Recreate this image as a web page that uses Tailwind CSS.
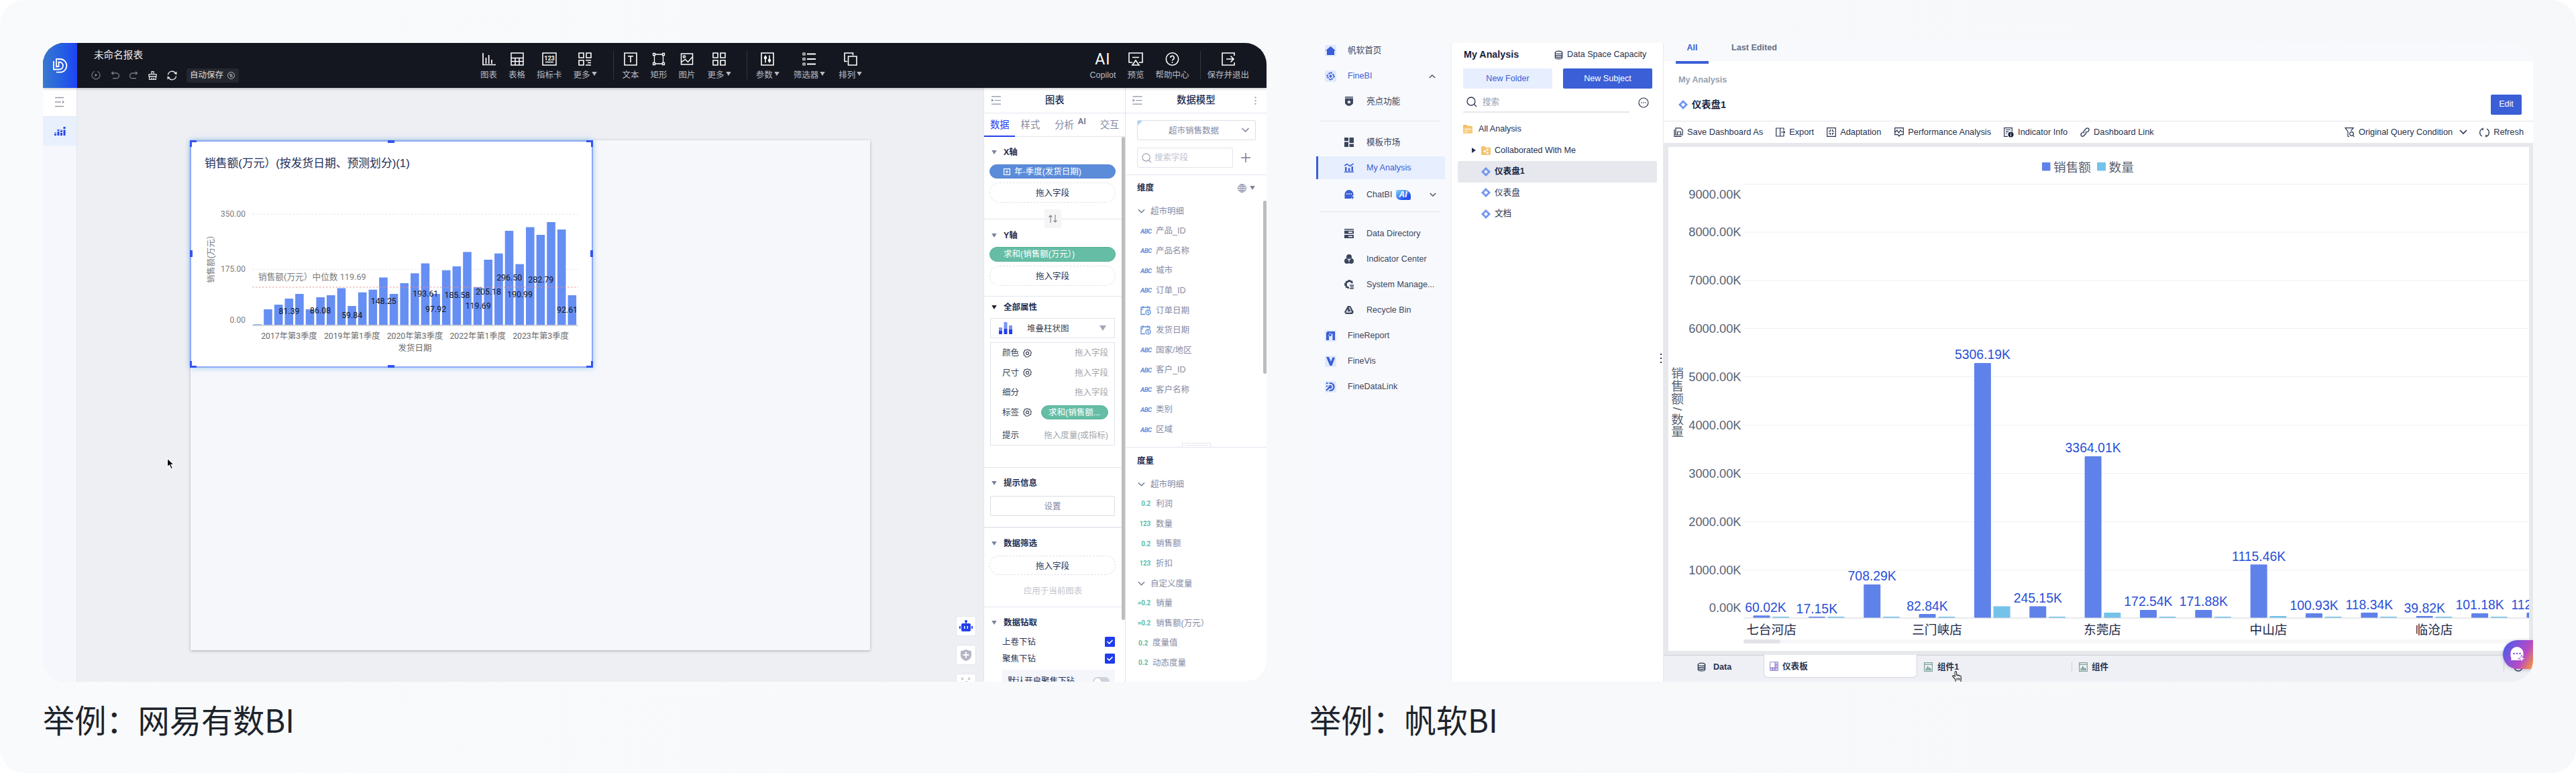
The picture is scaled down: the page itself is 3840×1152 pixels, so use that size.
<!DOCTYPE html>
<html lang="zh-CN">
<head>
    <meta charset="UTF-8">
    <meta name="viewport" content="width=device-width, initial-scale=1.0">
    <title>BI 工具对比</title>
    <script src="https://cdn.jsdelivr.net/npm/@tailwindcss/browser@4"></script>
    <style>
        body {
            font-family: 'Liberation Sans', 'Noto Sans CJK SC', sans-serif;
        }
        svg {
            flex-shrink: 0;
        }
        .num {
            font-family: 'Roboto', 'Noto Sans CJK SC', sans-serif;
        }
        .cap {
            font-family: 'Noto Sans CJK SC', sans-serif;
        }
    </style>
</head>
<body class="bg-white text-[12.5px] leading-none">
    <!-- shared icons -->
    <svg class="hidden">
        <symbol id="caret" viewBox="0 0 10 8"><path d="M0 0h10L5 8z" fill="currentColor"/></symbol>
        <symbol id="chev" viewBox="0 0 12 8"><path d="M1 1l5 5 5-5" fill="none" stroke="currentColor" stroke-width="1.6"/></symbol>
        <symbol id="gear" viewBox="0 0 14 14"><path d="M7 .8l1.9 1.3 2.3-.1.6 2.2 1.6 1.6-.9 2.1.1 2.3-2.3.7-1.5 1.7L7 12.9l-2.2.3-1.3-1.9-2.1-1 .2-2.3L.8 6l1.4-1.8.4-2.2 2.3-.1z" fill="none" stroke="currentColor" stroke-width="1.2" stroke-linejoin="round"/><circle cx="7" cy="7" r="2.3" fill="none" stroke="currentColor" stroke-width="1.2"/></symbol>
        <symbol id="collapse" viewBox="0 0 15 14"><path d="M0 1h15M5 7h10M0 13h15" stroke="currentColor" stroke-width="1.3"/><path d="M0 4.5v5L3.6 7z" fill="currentColor"/></symbol>
        <symbol id="glass" viewBox="0 0 16 16"><circle cx="7" cy="7" r="6" fill="none" stroke="currentColor" stroke-width="1.3"/><path d="M11.4 11.4L15 15" stroke="currentColor" stroke-width="1.3"/></symbol>
        <symbol id="db" viewBox="0 0 14 14"><g fill="none" stroke="currentColor" stroke-width="1.3"><ellipse cx="7" cy="3" rx="5.6" ry="2.3"/><path d="M1.4 3v8c0 1.3 2.5 2.3 5.6 2.3s5.6-1 5.6-2.3V3M1.4 5.8c0 1.2 2.5 2.2 5.6 2.2s5.6-1 5.6-2.2M1.4 8.6c0 1.2 2.5 2.2 5.6 2.2s5.6-1 5.6-2.2"/></g></symbol>
        <symbol id="dash" viewBox="0 0 14 14"><g fill="#6f95f0"><path d="M7 0l3 3-2 2-1-1-2 2-2-2z"/><path d="M14 7l-3 3-2-2 1-1-2-2 2-2z"/><path d="M7 14l-3-3 2-2 1 1 2-2 2 2z"/><path d="M0 7l3-3 2 2-1 1 2 2-2 2z"/></g></symbol>
        <symbol id="date" viewBox="0 0 16 14"><g fill="none" stroke="#5b8cda" stroke-width="1.3"><path d="M7 12.5H1V2h13v3.2M1 5.2h3M4 0v3.4M11 0v3.4"/><circle cx="11.5" cy="9.6" r="3.6"/><path d="M11.2 7.6v2.3l1.6 1"/></g></symbol>
        <symbol id="comp" viewBox="0 0 13 14"><g fill="none" stroke="#7fa59c" stroke-width="1.2"><path d="M.6.6h11.8v12.8H.6zM.6 3.4h11.8"/><path d="M3.4 12V8.5M5.6 12V6M7.7 12V7.5M9.8 12V9" stroke="#3e7d6e"/></g></symbol>
    </svg>

    <main class="flex h-[1152px] w-[3840px] gap-16 overflow-hidden rounded-[36px] bg-linear-to-r from-[#f8fafb] to-[#f6f8fa] px-16 pt-16">
        <figure class="w-[1824px]">
            <div class="flex h-[952px] flex-col overflow-hidden rounded-[32px] bg-[#eeeff3]">
                <!-- top bar -->
                <header class="relative z-10 flex h-[67px] shrink-0 bg-[#151720] text-[#b9bac0] shadow-[0_1px_4px_rgba(0,0,0,0.25)]">
                    <div class="flex w-[51px] items-center justify-center bg-linear-to-r from-[#3b78cf] to-[#1f43f2]">
                        <svg width="22" height="22" viewBox="0 0 22 22" fill="none" stroke="#fff" stroke-width="1.8"><path d="M1 4v12.500h8.500a5.500 5.500 0 0 0 0-11H8.500V12H6"/><path d="M5 13.500V1h5.500a9.600 9.600 0 0 1 0 19.700H5"/></svg>
                    </div>
                    <div class="w-[601px] pt-[10px] pl-[25px]">
                        <div class="text-[14.6px] leading-[17px] text-[#e9e9ec]">未命名报表</div>
                        <div class="mt-[10px] flex h-[22px] items-center">
                            <svg class="-ml-[4px]" width="14" height="14" viewBox="0 0 14 14" fill="none" stroke="#77787f" stroke-width="1.2"><path d="M9 1.200A6 6 0 1 1 5 1.200"/><path d="M5.500 4.500v5L9.500 7z" fill="#77787f" stroke="none"/></svg>
                            <svg class="ml-[15px]" width="13" height="12" viewBox="0 0 13 12" fill="none" stroke="#77787f" stroke-width="1.4"><path d="M1 3h7.500a3.800 3.800 0 0 1 0 7.800H3"/><path d="M4 0L.5 3 4 6z" fill="#77787f" stroke="none"/></svg>
                            <svg class="ml-[15px]" width="13" height="12" viewBox="0 0 13 12" fill="none" stroke="#77787f" stroke-width="1.4"><path d="M12 3H4.500a3.800 3.800 0 0 0 0 7.800H10"/><path d="M9 0l3.500 3L9 6z" fill="#77787f" stroke="none"/></svg>
                            <svg class="ml-[15px]" width="13" height="13" viewBox="0 0 13 13" fill="none" stroke="#e4e4e6" stroke-width="1.300"><path d="M5 4.500V.7h3v3.800M1 8V4.700h11V8zM1.600 8v4.300h9.800V8M5 12V9.800M8 12V9.800"/></svg>
                            <svg class="ml-[15px]" width="15" height="15" viewBox="0 0 15 15" fill="none" stroke="#e4e4e6" stroke-width="1.400"><path d="M1.500 6.500A6 6 0 0 1 12.800 4.500M13.500 8.500A6 6 0 0 1 2.200 10.500"/><path d="M14.500 1.500v5l-4-2zM.5 13.500v-5l4 2z" fill="#e4e4e6" stroke="none"/></svg>
                            <div class="ml-[14px] flex h-[21px] w-[78px] items-center gap-[6px] rounded-[3px] bg-[#25272f] pl-[5px] text-[#dededf]">自动保存
                                <svg width="11" height="11" viewBox="0 0 11 11" fill="none" stroke="#b9bac0"><circle cx="5.500" cy="5.500" r="5"/><path d="M3 4.500L4.500 3v5M8 6.500L6.500 8V3"/></svg>
                            </div>
                        </div>
                    </div>
                    <nav class="flex items-start pt-[14px] [&>div]:flex [&>div]:flex-col [&>div]:items-center [&>div]:gap-[8px] [&_span]:whitespace-nowrap [&_span]:leading-[12px]">
                        <div><svg width="20" height="20" viewBox="0 0 20 20" fill="none" stroke="#fff" stroke-width="1.700"><path d="M1 1v17.500h19M5.500 17V8M9.700 17V4M14 17v-6"/></svg><span>图表</span></div>
                        <div class="ml-[17px]"><svg width="20" height="20" viewBox="0 0 20 20" fill="none" stroke="#fff" stroke-width="1.500"><path d="M1 1h18v18H1zM1 8.500h18M1 13.500h18M7 8.500V19M13 8.500V19"/></svg><span>表格</span></div>
                        <div class="ml-[17px]"><svg width="22" height="20" viewBox="0 0 22 20" fill="none" stroke="#fff" stroke-width="1.500"><path d="M1 1h20v18H1zM5 14.500h12"/><text x="11" y="11.500" font-size="9" text-anchor="middle" fill="#fff" stroke="none" font-weight="bold" class="num">123</text></svg><span>指标卡</span></div>
                        <div class="ml-[17px]"><svg width="20" height="20" viewBox="0 0 20 20" fill="none" stroke="#fff" stroke-width="1.600"><path d="M1 1h7v7H1zM12 1h7v7h-7zM1 12h7v7H1zM11 12h8M14 15.500h5M11 19h8"/></svg><span>更多<svg class="ml-[2px] inline align-[3px]" width="8" height="6"><use href="#caret"/></svg></span></div>
                        <i class="mt-[-2px] ml-[24px] h-[42px] w-px bg-[#35373f]"></i>
                        <div class="ml-[13px]"><svg width="20" height="20" viewBox="0 0 20 20" fill="none" stroke="#fff" stroke-width="1.600"><path d="M1 1h18v18H1zM6 5.800h8M10 6v9"/></svg><span>文本</span></div>
                        <div class="ml-[17px]"><svg width="20" height="20" viewBox="0 0 20 20" fill="none" stroke="#fff" stroke-width="1.300"><path d="M3.500 5v10M16.500 5v10M5 3h10M5 17h10M1.500 1.500h3v3h-3zM15.500 1.500h3v3h-3zM1.500 15.500h3v3h-3zM15.500 15.500h3v3h-3z"/></svg><span>矩形</span></div>
                        <div class="ml-[17px]"><svg width="20" height="20" viewBox="0 0 20 20" fill="none" stroke="#fff" stroke-width="1.500"><path d="M1.500 2h17v16h-17zM2 14.500l5.500-4 4 4 6.500-7.500"/><circle cx="6" cy="6.500" r="1.600"/></svg><span>图片</span></div>
                        <div class="ml-[18px]"><svg width="20" height="20" viewBox="0 0 20 20" fill="none" stroke="#fff" stroke-width="1.600"><path d="M1 1h7v7H1zM12 1h7v7h-7zM1 12h7v7H1zM12 12h7v7h-7z"/></svg><span>更多<svg class="ml-[2px] inline align-[3px]" width="8" height="6"><use href="#caret"/></svg></span></div>
                        <i class="mt-[-2px] ml-[23px] h-[42px] w-px bg-[#35373f]"></i>
                        <div class="ml-[13px]"><svg width="20" height="20" viewBox="0 0 20 20" fill="none" stroke="#fff" stroke-width="1.600"><path d="M1 1h18v18H1zM7 4.500v11M13 4.500v11"/><circle cx="7" cy="8" r="1.500" fill="#fff"/><circle cx="13" cy="12" r="1.500" fill="#fff"/></svg><span>参数<svg class="ml-[2px] inline align-[3px]" width="8" height="6"><use href="#caret"/></svg></span></div>
                        <div class="ml-[21px]"><svg width="20" height="20" viewBox="0 0 20 20" fill="none" stroke="#fff" stroke-width="1.200"><path d="M1 1h3v3H1zM1 8.500h3v3H1zM1 16h3v3H1z"/><path d="M7 2.500h13M7 10h13M7 17.500h13" stroke-width="2"/></svg><span>筛选器<svg class="ml-[2px] inline align-[3px]" width="8" height="6"><use href="#caret"/></svg></span></div>
                        <div class="ml-[20px]"><svg width="20" height="20" viewBox="0 0 20 20" fill="none" stroke="#fff" stroke-width="1.600"><path d="M5 13.500H1V1h12.500v3.500M6.500 6H19v13H6.500z"/></svg><span>排列<svg class="ml-[2px] inline align-[3px]" width="8" height="6"><use href="#caret"/></svg></span></div>
                    </nav>
                    <nav class="mr-[26px] ml-auto flex items-start pt-[14px] [&>div]:flex [&>div]:flex-col [&>div]:items-center [&>div]:gap-[8px] [&_span]:whitespace-nowrap [&_span]:leading-[12px]">
                        <div><b class="num h-[20px] text-[23px] leading-[21px] font-normal tracking-[1px] text-white">AI</b><span>Copilot</span></div>
                        <div class="ml-[17px]"><svg width="22" height="20" viewBox="0 0 22 20" fill="none" stroke="#fff" stroke-width="1.600"><path d="M6 15H1V1h20v14h-5M6 7.500h10M11 12l5 7H6z"/></svg><span>预览</span></div>
                        <div class="ml-[17px]"><svg width="21" height="20" viewBox="0 0 21 20" fill="none" stroke="#fff" stroke-width="1.600"><circle cx="10.500" cy="10" r="9.200"/><path d="M7.800 8a2.700 2.700 0 1 1 4 2.400c-1 .6-1.300 1-1.300 2.100M10.500 14v1.800"/></svg><span>帮助中心</span></div>
                        <i class="mt-[-2px] ml-[17px] h-[42px] w-px bg-[#35373f]"></i>
                        <div class="ml-[9px]"><svg width="20" height="20" viewBox="0 0 20 20" fill="none" stroke="#fff" stroke-width="1.600"><path d="M19 5V1H1v18h18v-4M7 10h11M13.500 5.500L18 10l-4.500 4.500"/></svg><span>保存并退出</span></div>
                    </nav>
                </header>

                <div class="flex flex-1">
                    <aside class="w-[50px] bg-[#f5f7fc] shadow-[1px_0_1px_#e4e6ec]">
                        <div class="flex h-[43px] items-center justify-center border-b border-[#e6e8f0] bg-white">
                            <svg width="14" height="16" viewBox="0 0 14 16" stroke="#9a9ba6" stroke-width="1.500"><path d="M0 1.500h13M0 8h9M0 14.500h13"/><path d="M11 5.500v5L14 8z" fill="#9a9ba6" stroke="none"/></svg>
                        </div>
                        <div class="flex h-[43px] items-center justify-center bg-[#e9f0fd]">
                            <svg width="17" height="13" viewBox="0 0 17 13" fill="#2544f0"><path d="M0 10.500h3V13H0zM0 8.500h3v1H0zM4.500 7h3v6h-3zM4.500 4h3v2h-3zM9 9h3v4H9zM9 6h3v2H9zM9 4.500h3v1H9zM13.500 4.500h3V13h-3zM13.500 0h3v3h-3z"/></svg>
                        </div>
                    </aside>

                    <!-- report canvas -->
                    <section class="relative w-[1353px]">
                        <div class="absolute top-[78px] left-[170px] h-[760px] w-[1013px] bg-[#f5f7fb] shadow-[0_1px_4px_rgba(0,0,0,0.28)]"></div>
                        <div class="absolute top-[78px] left-[169px] h-[339px] w-[601px] bg-white shadow-[0_0_8px_rgba(90,170,230,0.6)]">
                            <svg id="salesChart" class="block" width="601" height="339" viewBox="283 209 601 339"></svg>
                        </div>
                        <svg class="absolute top-[551px] left-[134px]" width="14" height="22" viewBox="0 0 14 22"><path d="M1.500 1v13l3-2.700 2.500 5.500 2.500-1.100L7 10.500h4.300z" fill="#000" stroke="#fff" stroke-width="1.200"/></svg>
                        <div class="absolute top-[787px] left-[1311px] flex flex-col gap-[13px] [&>div]:flex [&>div]:h-[30px] [&>div]:w-[30px] [&>div]:items-center [&>div]:justify-center [&>div]:rounded-[3px] [&>div]:border [&>div]:border-[#e3e5ee] [&>div]:bg-white">
                            <div><svg width="20" height="18" viewBox="0 0 20 18" fill="#2340ef"><circle cx="10" cy="2" r="2"/><path d="M9.200 2h1.600v4H9.200zM0 9h2v4H0zM18 9h2v4h-2zM5 5h10a2 2 0 0 1 2 2v8a2 2 0 0 1-2 2H5a2 2 0 0 1-2-2V7a2 2 0 0 1 2-2z"/><path d="M7 9h1.500v4H7zM11.500 9H13v4h-1.500z" fill="#fff"/></svg></div>
                            <div><svg width="16" height="17" viewBox="0 0 16 17"><path d="M8 0l8 2.500v6C16 13 12 15.800 8 17c-4-1.200-8-4-8-8.500v-6z" fill="#b4b5c2"/><path d="M8 3.500v9M3.500 8h9" stroke="#fff" stroke-width="2"/></svg></div>
                            <div><svg width="16" height="20" viewBox="0 0 16 20" fill="none" stroke="#bdbec8" stroke-width="1.200"><path d="M1 1l3 3M4 1L1 4M11 1l3 3M14 1l-3 3M4 16l5-5M7 8c2-3 5-1 3 3"/></svg></div>
                        </div>
                    </section>

                    <!-- chart settings -->
                    <section class="relative w-[210px] bg-white text-[#2a3454] shadow-[-1px_0_0_#e4e6ee]">
                        <div class="flex h-[38px] items-center border-b border-[#e3e5ee]">
                            <svg class="ml-[11px] text-[#8a8fa8]" width="14" height="13"><use href="#collapse"/></svg>
                            <b class="ml-[66px] text-[14.3px] font-medium text-[#202b50]">图表</b>
                        </div>
                        <div class="flex h-[35px] items-center border-b border-[#e3e5ee] pl-[9px] text-[14.3px] text-[#8288a2]">
                            <span class="relative text-[#2340ef] after:absolute after:-left-[9px] after:top-[23px] after:h-[2px] after:w-[46px] after:bg-[#2340ef]">数据</span>
                            <span class="ml-[17px]">样式</span>
                            <span class="ml-[22px]">分析</span>
                            <b class="num mb-[9px] ml-[6px] w-[12px] text-[12.5px] text-[#777c92]">AI</b>
                            <span class="ml-[21px]">交互</span>
                        </div>
                        <div class="absolute top-[73px] right-0 h-[720px] w-[5px] rounded-full bg-[#bdbdbd]"></div>
                        <div class="mr-[5px] [&_h3]:flex [&_h3]:h-[22px] [&_h3]:items-center [&_h3]:gap-[10px] [&_h3]:pl-[11px] [&_h3]:font-bold [&_h3]:text-[#202b50]">
                            <div class="relative h-[123px] border-b border-[#e3e5ee] pt-[12px]">
                                <h3><svg class="text-[#7b809a]" width="8" height="6"><use href="#caret"/></svg>X轴</h3>
                                <div class="mt-[7px] ml-[8px] flex h-[21px] w-[188px] items-center gap-[6px] rounded-full border border-[#4f80cf] bg-[#5b8cda] pt-px pl-[20px] text-white"><svg width="10" height="10" viewBox="0 0 10 10" fill="none" stroke="#fff" stroke-width="1.200"><path d="M.6.6h8.800v8.800H.6zM5 2.800v4.400M2.800 5h4.400"/></svg>年-季度(发货日期)</div>
                                <div class="mt-[6px] ml-[8px] flex h-[30px] w-[188px] items-center justify-center rounded-full border border-dashed border-[#dfe1e8] pt-[3px]">拖入字段</div>
                                <div class="absolute -bottom-[14px] left-[90px] flex h-[28px] w-[25px] items-center justify-center bg-[#f5f5f6]"><svg width="13" height="12" viewBox="0 0 13 12" fill="none" stroke="#85868c" stroke-width="1.200"><path d="M3 12V1M.5 3.500L3 1l2.500 2.500M10 0v11M7.500 8.500L10 11l2.500-2.500"/></svg></div>
                            </div>
                            <div class="h-[115px] border-b border-[#e3e5ee] pt-[13px]">
                                <h3><svg class="text-[#7b809a]" width="8" height="6"><use href="#caret"/></svg>Y轴</h3>
                                <div class="mt-[6px] ml-[8px] flex h-[22px] w-[188px] items-center rounded-full border border-[#55b096] bg-[#65bda6] pt-px pl-[20px] text-white">求和(销售额(万元）)</div>
                                <div class="mt-[6px] ml-[8px] flex h-[30px] w-[188px] items-center justify-center rounded-full border border-dashed border-[#dfe1e8] pt-[3px]">拖入字段</div>
                            </div>
                            <div class="h-[255px] border-b border-[#e3e5ee] pt-[5px]">
                                <h3><svg class="text-[#222]" width="8" height="6"><use href="#caret"/></svg>全部属性</h3>
                                <div class="mt-[5px] ml-[9px] flex h-[30px] w-[186px] items-center border border-[#e0e2ea] pl-[12px] text-[#3a3f50]">
                                    <svg width="20" height="18" viewBox="0 0 20 18"><path d="M0 8h5v5H0zM7.500 0h5v10h-5zM15 5h5v6h-5z" fill="#7d93f7"/><path d="M0 13h5v5H0zM7.500 10h5v8h-5zM15 11h5v7h-5z" fill="#2340ef"/></svg>
                                    <span class="ml-[22px] pt-[2px]">堆叠柱状图</span>
                                    <svg class="ml-[45px] text-[#a3a6b8]" width="10" height="8"><use href="#caret"/></svg>
                                </div>
                                <div class="mt-[6px] ml-[9px] h-[154px] w-[186px] border border-[#e0e2ea] pr-[9px] pl-[17px] text-[#3a3f50] [&>div]:flex [&>div]:h-[29.5px] [&>div]:items-center [&>div]:pt-px [&_em]:ml-auto [&_em]:text-[#a5a6ac] [&_em]:not-italic">
                                    <div>颜色<svg class="ml-[6px]" width="13" height="13"><use href="#gear"/></svg><em>拖入字段</em></div>
                                    <div>尺寸<svg class="ml-[6px]" width="13" height="13"><use href="#gear"/></svg><em>拖入字段</em></div>
                                    <div>细分<em>拖入字段</em></div>
                                    <div>标签<svg class="ml-[6px]" width="13" height="13"><use href="#gear"/></svg><span class="ml-auto flex h-[21px] w-[100px] items-center rounded-full border border-[#55b096] bg-[#65bda6] pl-[10px] text-white">求和(销售额...</span></div>
                                    <div class="mt-[5px]">提示<em>拖入度量(或指标)</em></div>
                                </div>
                            </div>
                            <div class="h-[90px] border-b-2 border-[#e9eaf1] pt-[12px]">
                                <h3><svg class="text-[#7b809a]" width="8" height="6"><use href="#caret"/></svg>提示信息</h3>
                                <div class="mt-[8px] ml-[9px] flex h-[30px] w-[186px] items-center justify-center rounded-[2px] border border-[#dcdde4] pt-[2px] text-[#7f859f]">设置</div>
                            </div>
                            <div class="h-[118px] border-b border-[#e3e5ee] pt-[12px]">
                                <h3><svg class="text-[#7b809a]" width="8" height="6"><use href="#caret"/></svg>数据筛选</h3>
                                <div class="mt-[7px] ml-[8px] flex h-[29px] w-[188px] items-center justify-center rounded-full border border-dashed border-[#dfe1e8] pt-[3px]">拖入字段</div>
                                <div class="mt-[13px] flex h-[22px] items-center justify-center text-[#c2c4cd]">应用于当前图表</div>
                            </div>
                            <div class="h-[111px] overflow-hidden pt-[12px]">
                                <h3><svg class="text-[#7b809a]" width="8" height="6"><use href="#caret"/></svg>数据钻取</h3>
                                <div class="mt-[5px] mr-[10px] ml-[27px] flex h-[25px] items-center justify-between"><span class="pt-[2px]">上卷下钻</span><svg width="15" height="15" viewBox="0 0 15 15"><rect width="15" height="15" rx="1.500" fill="#1f3cf0"/><path d="M3.500 7l3 3 5-5" fill="none" stroke="#fff" stroke-width="1.700"/></svg></div>
                                <div class="mr-[10px] ml-[27px] flex h-[25px] items-center justify-between"><span class="pt-[2px]">聚焦下钻</span><svg width="15" height="15" viewBox="0 0 15 15"><rect width="15" height="15" rx="1.500" fill="#1f3cf0"/><path d="M3.500 7l3 3 5-5" fill="none" stroke="#fff" stroke-width="1.700"/></svg></div>
                                <div class="mt-[4px] ml-[26px] flex h-[34px] w-[169px] items-center justify-between bg-[#f5f6fb] pr-[8px] pl-[9px]">默认开启聚焦下钻<i class="mt-[1px] flex h-[14px] w-[25px] rounded-full bg-[#cdd2dc] p-[2px]"><i class="h-[10px] w-[10px] rounded-full bg-white"></i></i></div>
                            </div>
                        </div>
                    </section>

                    <!-- data model -->
                    <section class="relative ml-px w-[210px] bg-white text-[#858ba5] shadow-[-1px_0_0_#e0e2ea]">
                        <div class="flex h-[38px] items-center border-b border-[#e3e5ee]">
                            <svg class="ml-[10px] text-[#8a8fa8]" width="15" height="13"><use href="#collapse"/></svg>
                            <b class="ml-[51px] text-[14.4px] font-medium text-[#202b50]">数据模型</b>
                            <svg class="ml-[58px]" width="3" height="12" viewBox="0 0 3 12" fill="#a9acba"><circle cx="1.500" cy="1.200" r="1.200"/><circle cx="1.500" cy="6" r="1.200"/><circle cx="1.500" cy="10.800" r="1.200"/></svg>
                        </div>
                        <div class="h-[92px] border-b border-[#e3e5ee] pt-[10px] pl-[17px]">
                            <div class="relative flex h-[30px] w-[177px] items-center justify-center rounded-[2px] border border-[#dddfe6]">
                                <svg class="absolute top-0 left-0" width="7" height="7"><path d="M0 0h7L0 7z" fill="#a9d0f5"/></svg>
                                <span class="-ml-[8px] pt-[2px]">超市销售数据</span>
                                <svg class="absolute right-[8px]" width="13" height="8"><use href="#chev"/></svg>
                            </div>
                            <div class="mt-[11px] flex items-center">
                                <div class="flex h-[30px] w-[143px] items-center gap-[4px] rounded-[2px] border border-[#e2e4ea] pl-[6px] text-[#c0c3ce]"><svg class="text-[#9a9eb0]" width="15" height="15"><use href="#glass"/></svg><span class="pt-px">搜索字段</span></div>
                                <svg class="ml-[12px]" width="14" height="14" viewBox="0 0 14 14" stroke="#757a92" stroke-width="1.500"><path d="M7 0v14M0 7h14"/></svg>
                            </div>
                        </div>
                        <div class="flex h-[38px] items-center pl-[17px]">
                            <b class="text-[#202b50]">维度</b>
                            <svg class="ml-[125px]" width="13" height="13" viewBox="0 0 13 13" fill="none" stroke="#8a8fa8"><circle cx="6.500" cy="6.500" r="6"/><ellipse cx="6.500" cy="6.500" rx="2.800" ry="6"/><path d="M6.500.5v12M.5 6.500h12M1.500 3.500h10M1.500 9.500h10"/></svg>
                            <svg class="ml-[5px] text-[#7b809a]" width="8" height="6"><use href="#caret"/></svg>
                        </div>
                        <div class="absolute top-[168px] right-0 h-[258px] w-[5px] rounded-full bg-[#bdbdbd]"></div>
                        <div id="dims" class="h-[368px] border-b border-[#e3e5ee] pt-px"></div>
                        <div class="relative pt-px">
                            <div class="absolute -top-[7px] left-[84px] h-[7px] w-[43px] border border-b-0 border-[#e3e5ee] px-[4px] pt-[2px]"><i class="block h-px bg-[#e3e5ee]"></i></div>
                            <b class="flex h-[39px] items-center pl-[17px] text-[#202b50]">度量</b>
                            <div id="measures"></div>
                        </div>
                    </section>
                </div>
            </div>
            <figcaption class="cap mt-[32px] text-[47.2px] leading-[48px] text-[#1d232c]">举例：网易有数BI</figcaption>
        </figure>

        <figure class="w-[1824px]">
            <div class="flex h-[952px] overflow-hidden rounded-[32px] bg-white text-[12.6px] text-[#3b465e]">
                <!-- product navigation -->
                <aside class="h-full w-[212px] border-r border-[#eceef3] bg-[#f8f9fd] [&_a]:flex [&_a]:h-[38px] [&_a]:items-center">
                    <div class="-mt-[8px]">
                        <a class="pl-[23px]"><svg width="17" height="17" viewBox="0 0 17 17"><rect width="17" height="17" rx="2" fill="#e0e9fc"/><path d="M8.500 2L16 8.500h-2V15H3V8.500H1z" fill="#3a5fd6"/></svg><span class="ml-[17px]">帆软首页</span></a>
                        <a class="pl-[23px] text-[#3a5fd6]"><svg width="17" height="17" viewBox="0 0 17 17"><rect width="17" height="17" rx="2" fill="#e0e9fc"/><path d="M8.500 2.500l6 6-6 6-6-6z" fill="none" stroke="#3a5fd6" stroke-width="1.800" stroke-dasharray="3 1.250"/><path d="M8.500 6l2.500 2.500-2.500 2.500L6 8.500z" fill="#3a5fd6"/></svg><span class="ml-[17px]">FineBI</span><svg class="ml-[85px] rotate-180 text-[#3b465e]" width="10" height="7"><use href="#chev"/></svg></a>
                        <a class="pl-[52px]"><svg width="14" height="14" viewBox="0 0 14 14" fill="#3b465e"><path d="M1 0h12v1.500H1zM1 2.500h12V9c0 2.500-3 4-6 5-3-1-6-2.500-6-5z"/><path d="M7 5l1 2 2 .2L8.500 8.500 9 10.500 7 9.500l-2 1 .5-2L4 7.200 6 7z" fill="#fff"/></svg><span class="ml-[19px]">亮点功能</span></a>
                    </div>
                    <hr class="mx-[15px] mt-[10px] mb-[12px] border-[#e4e6ec]">
                    <a class="pl-[52px]"><svg width="14" height="14" viewBox="0 0 14 14" fill="#3b465e"><path d="M0 0h6v5H0zM0 6.500h6V14H0zM7.500 0H14v8H7.500zM7.500 9.500H14V14H7.500z"/></svg><span class="ml-[19px]">模板市场</span></a>
                    <div class="my-[2px] mr-[9px] ml-[10px] flex h-[34px] items-center border-l-[3px] border-[#3a5fd6] bg-[#e7eefd] pl-[39px] text-[#3a5fd6]"><svg width="14" height="14" viewBox="0 0 14 14" fill="#3a5fd6"><path d="M0 12.500h14V14H0zM1 6h2.500v6H1zM5.800 7.500h2.500V12H5.800zM10.500 5H13v7h-2.500z"/><path d="M0 4l4-2.500 4 3L13.500 1" fill="none" stroke="#3a5fd6" stroke-width="1.500"/></svg><span class="ml-[19px]">My Analysis</span></div>
                    <a class="mt-[4px] pl-[52px]"><svg width="15" height="15" viewBox="0 0 15 15" fill="#3a5fd6"><path d="M7 0a6.500 6.500 0 0 1 6.500 6.500V8L11 9l-1 4H.5V6.500A6.500 6.500 0 0 1 7 0z"/><path d="M12 8l.9 2.300 2.100.9-2.100.9L12 14.500l-.9-2.400-2.100-.9 2.100-.9z"/><circle cx="4" cy="6" r=".9" fill="#fff"/><circle cx="7" cy="6" r=".9" fill="#fff"/><circle cx="10" cy="6" r=".9" fill="#fff"/></svg><span class="ml-[18px]">ChatBI</span><b class="ml-[5px] flex h-[15px] w-[22px] items-center justify-center rounded-[2px] rounded-tr-[9px] rounded-bl-[7px] bg-linear-to-br from-[#8fd6f8] to-[#2353ea] to-70% text-[12px] text-white italic">AI</b><svg class="ml-[28px]" width="10" height="7"><use href="#chev"/></svg></a>
                    <hr class="mx-[15px] mt-[6px] mb-[13px] border-[#e4e6ec]">
                    <a class="pl-[52px]"><svg width="14" height="14" viewBox="0 0 14 14" fill="#3b465e"><path d="M0 0h14v1.500H0zM0 2.800h14v4.700H0zM0 9h14v5H0z"/><path d="M6 4.300h6V6H6zM6 10.700h6v1.600H6z" fill="#fff"/></svg><span class="ml-[19px]">Data Directory</span></a>
                    <a class="pl-[52px]"><svg width="14" height="14" viewBox="0 0 14 14" fill="#3b465e"><circle cx="7" cy="4" r="4"/><circle cx="4" cy="10" r="4"/><circle cx="10" cy="10" r="4"/><path d="M7 11V8.500M7 8.500L4.800 6.500M7 8.500l2.200-2" stroke="#f8f9fd" stroke-width="1.200"/></svg><span class="ml-[19px]">Indicator Center</span></a>
                    <a class="pl-[52px]"><svg width="14" height="14" viewBox="0 0 14 14" fill="none" stroke="#3b465e"><path d="M12 5A5 5 0 1 0 7 12" stroke-width="2.600"/><path d="M6 0h2.500v2H6zM0 5.500h2v2.500H0zM2 2l1.500 1.500M2 11.500L3.500 10M11 2.500l1-1" stroke-width="1.300"/><path d="M8 8h6M9 10.500h5M8 13h6" stroke-width="1.500"/></svg><span class="ml-[19px]">System Manage...</span></a>
                    <a class="pl-[52px]"><svg width="14" height="14" viewBox="0 0 14 14" fill="#3b465e"><path d="M5 1h4l5 9-2 3H2l-2-3z"/><path d="M7 3l2.700 5M5 6.500L3.200 10H9M11 9.500l-3 .5" fill="none" stroke="#f8f9fd" stroke-width="1.300"/></svg><span class="ml-[19px]">Recycle Bin</span></a>
                    <a class="pl-[23px]"><svg width="17" height="17" viewBox="0 0 17 17"><rect width="17" height="17" rx="2" fill="#e0e9fc"/><path d="M2 15V4l2-2h11v13h-3.500V5.500H9.500V9H6v6z" fill="#3a5fd6"/><path d="M6 5h3M6 7v2" stroke="#e0e9fc"/></svg><span class="ml-[17px]">FineReport</span></a>
                    <a class="pl-[23px]"><svg width="17" height="17" viewBox="0 0 17 17"><rect width="17" height="17" rx="2" fill="#e0e9fc"/><path d="M2 2h4l3 7 2.500-6.500L15 3l-4.500 12H7.500z" fill="#3a5fd6"/></svg><span class="ml-[17px]">FineVis</span></a>
                    <a class="pl-[23px]"><svg width="17" height="17" viewBox="0 0 17 17" fill="none" stroke="#3a5fd6" stroke-width="2.200"><rect width="17" height="17" rx="2" fill="#e0e9fc" stroke="none"/><path d="M6.500 3H8a5.500 5.500 0 0 1 0 11H6.500M2 14l4.500-4.500"/><circle cx="8" cy="8.500" r="1.500"/><path d="M2 3h2.500M2 7.500h2" stroke-width="1.800"/></svg><span class="ml-[17px]">FineDataLink</span></a>
                </aside>

                <!-- subject tree -->
                <section class="relative h-full w-[316px] border-r border-[#e6e8ee] text-[#27324f]">
                    <div class="flex h-[35px] items-center pl-[18px]">
                        <b class="text-[14.3px] text-[#17223f]">My Analysis</b>
                        <svg class="ml-[53px]" width="13" height="14"><use href="#db"/></svg>
                        <span class="ml-[6px]">Data Space Capacity</span>
                    </div>
                    <div class="mt-[3px] flex gap-[16px] pl-[17px]">
                        <div class="flex h-[30px] w-[133px] items-center justify-center rounded-[2px] bg-[#e7eefd] text-[#3a5fd6]">New Folder</div>
                        <div class="flex h-[30px] w-[133px] items-center justify-center rounded-[2px] bg-[#3a5fd6] text-white">New Subject</div>
                    </div>
                    <div class="flex h-[36px] items-center pl-[17px]">
                        <div class="flex h-full w-[248px] items-center border-b-2 border-[#e6e7eb] pt-[6px] pl-[5px] text-[#9aa0ae]"><svg class="text-[#27324f]" width="16" height="16"><use href="#glass"/></svg><span class="ml-[8px]">搜索</span></div>
                        <svg class="mt-[6px] ml-[13px]" width="16" height="16" viewBox="0 0 16 16" fill="none" stroke="#27324f"><circle cx="8" cy="8" r="7" stroke-width="1.200"/><path d="M4.500 8h1.300M7.400 8h1.300M10.300 8h1.300" stroke-width="1.400"/></svg>
                    </div>
                    <div class="mt-[9px] [&>div]:flex [&>div]:h-[31.500px] [&>div]:items-center">
                        <div class="pl-[17px]"><svg width="14" height="13" viewBox="0 0 14 13"><path d="M0 1l1-1h4l1.500 1.800H13l1 1V12l-1 1H1l-1-1z" fill="#f2bf62"/><path d="M0 4h14v8l-1 1H1l-1-1z" fill="#f6cd7d"/><path d="M2.500 6.500h9M2.500 10h4" stroke="#fff"/></svg><span class="ml-[9px]">All Analysis</span></div>
                        <div class="pl-[30px]"><svg width="6" height="8"><path d="M0 0l6 4-6 4z" fill="#27324f"/></svg><svg class="ml-[8px]" width="14" height="13" viewBox="0 0 14 13"><path d="M0 1l1-1h4l1.500 1.800H13l1 1V12l-1 1H1l-1-1z" fill="#f3c36b"/><g fill="#fff" stroke="#fff" stroke-width=".8"><circle cx="5" cy="7.500" r="1.200"/><circle cx="9.500" cy="5" r="1.200"/><circle cx="9.500" cy="10" r="1.200"/><path d="M9.500 5L5 7.500l4.500 2.500" fill="none"/></g></svg><span class="ml-[6px]">Collaborated With Me</span></div>
                        <div class="mx-[9px] rounded-[2px] bg-[#e6e8ed] pl-[35px]"><svg width="14" height="14"><use href="#dash"/></svg><b class="ml-[6px] text-[#17223f]">仪表盘1</b></div>
                        <div class="pl-[44px]"><svg width="14" height="14"><use href="#dash"/></svg><span class="ml-[6px]">仪表盘</span></div>
                        <div class="pl-[44px]"><svg width="14" height="14"><use href="#dash"/></svg><span class="ml-[6px]">文档</span></div>
                    </div>
                    <svg class="absolute top-[463px] right-[2px]" width="2" height="14" fill="#27324f"><path d="M0 0h2v2H0zM0 6h2v2H0zM0 12h2v2H0z"/></svg>
                </section>

                <!-- dashboard -->
                <section class="relative flex h-full w-[1296px] flex-col text-[#27324f]">
                    <div class="flex h-[27px] bg-[#f8f9fd] pl-[18px] font-bold text-[#667085]">
                        <div class="flex h-[31px] w-[49px] justify-center border-b-4 border-[#3a5fd6] pt-px text-[#3a5fd6]">All</div>
                        <div class="ml-[34px] pt-px">Last Edited</div>
                    </div>
                    <div class="h-[90px] border-b border-[#e3e5ea] pr-[17px] pl-[22px]">
                        <div class="pt-[22px] font-bold text-[#98a0af]">My Analysis</div>
                        <div class="mt-[15px] flex h-[30px] items-center"><svg width="14" height="14"><use href="#dash"/></svg><b class="ml-[6px] pt-[2px] text-[14.300px] text-[#17223f]">仪表盘1</b><span class="ml-auto flex h-[30px] w-[46px] items-center justify-center rounded-[2px] bg-[#3a5fd6] text-white">Edit</span></div>
                    </div>
                    <div class="flex h-[32px] items-center pr-[14px] pl-[15px] text-[12.8px] whitespace-nowrap [&>span]:ml-[6px]">
                        <svg width="14" height="14" viewBox="0 0 14 14" fill="none" stroke="#27324f" stroke-width="1.200"><path d="M3 11V.8h7l3.200 3V11zM5.500 11V6.500h5V11M1 3v10.300h10.500"/></svg><span>Save Dashboard As</span>
                        <svg class="ml-[19px]" width="14" height="14" viewBox="0 0 14 14" fill="none" stroke="#27324f" stroke-width="1.200"><path d="M.7 1h6v12h-6zM6.700 1H12v3M6.700 13H12v-3M8 7h5.500M11.500 4.800L13.600 7l-2.100 2.200"/></svg><span>Export</span>
                        <svg class="ml-[19px]" width="14" height="14" viewBox="0 0 14 14" fill="none" stroke="#27324f" stroke-width="1.200"><path d="M.7.7h12.600v12.600H.7zM5.500 3v2.500H3M8.500 3v2.500H11M5.500 11V8.500H3M8.500 11V8.500H11"/></svg><span>Adaptation</span>
                        <svg class="ml-[20px]" width="14" height="14" viewBox="0 0 14 14" fill="none" stroke="#27324f" stroke-width="1.200"><path d="M.7.7h12.600v10H9L7 13l-2-2.300H.7zM1 7l3-3 2.500 4L9 4l2 2.500h2"/></svg><span>Performance Analysis</span>
                        <svg class="ml-[19px]" width="15" height="15" viewBox="0 0 15 15" fill="none" stroke="#27324f" stroke-width="1.200"><path d="M6 13.300H.7V.7h11.600V6M3 3.500h7M3 6.300h4M3 9h2"/><circle cx="10.500" cy="10.500" r="4" fill="#17223f" stroke="none"/><path d="M10.500 8v1.200M10.500 10v3" stroke="#fff"/></svg><span>Indicator Info</span>
                        <svg class="ml-[19px]" width="14" height="14" viewBox="0 0 14 14" fill="none" stroke="#27324f" stroke-width="1.300"><path d="M6 8.500C4.500 7 5 5.500 6 4.500l2.500-2.700c3-2.500 6 .7 3.700 3.500L10.500 7M8 5.500C9.500 7 9 8.500 8 9.500l-2.500 2.700c-3 2.500-6-.7-3.700-3.500L3.500 7"/></svg><span>Dashboard Link</span>
                        <svg class="ml-auto" width="15" height="14" viewBox="0 0 15 14" fill="none" stroke="#27324f" stroke-width="1.200"><path d="M5 13.500V6L1 .7h12L9.500 5M5 13.500h2"/><circle cx="10.500" cy="9.500" r="2.800"/><path d="M12.500 11.500L14.500 14"/></svg><span>Original Query Condition</span>
                        <svg class="ml-[10px]" width="12" height="8"><use href="#chev"/></svg>
                        <svg class="ml-[18px]" width="15" height="15" viewBox="0 0 15 15" fill="none" stroke="#27324f" stroke-width="1.300"><path d="M4 13A6.300 6.300 0 0 1 5 1.500M11 2A6.300 6.300 0 0 1 10 13.500M2.500 3L5.200 1.400 5 4.200M12.500 12L9.800 13.600l.2-2.800"/></svg><span>Refresh</span>
                    </div>
                    <div class="h-[763px] bg-[#e6e8ec] pt-[6px] pl-[7px]">
                        <svg id="storeChart" class="block bg-white" width="1283" height="751" viewBox="2487 219 1283 751"></svg>
                    </div>
                    <div class="flex h-[40px] border-t border-[#ced0d6] bg-[#eff0f5] font-bold">
                        <div class="flex h-[34px] w-[149px] items-center pl-[50px]"><svg width="13" height="14"><use href="#db"/></svg><span class="ml-[11px]">Data</span></div>
                        <div class="-mt-px flex h-[34px] w-[229px] items-center rounded-b-[6px] border border-t-0 border-[#d5d7dd] bg-white pl-[8px]"><svg width="13" height="14" viewBox="0 0 13 14"><rect x=".6" y=".6" width="11.800" height="12.800" fill="#fff" stroke="#9c90cf"/><path d="M8 1h4v12H8zM1 9h7v4H1z" fill="#c9c1ea"/><path d="M8 .6v13M.6 9H8M8 5h4.500M8 9h4.500M4.500 9v4" stroke="#8878c4"/></svg><span class="ml-[6px] pt-px">仪表板</span></div>
                        <div class="flex h-[34px] w-[230px] items-center pl-[10px]"><svg width="13" height="14"><use href="#comp"/></svg><span class="ml-[7px] pt-px">组件1</span></div>
                        <i class="mt-[10px] h-[14px] w-px bg-[#d0d2d9]"></i>
                        <div class="flex h-[34px] items-center pl-[10px]"><svg width="13" height="14"><use href="#comp"/></svg><span class="ml-[6px] pt-px">组件</span></div>
                        <i class="mt-[10px] mr-[43px] ml-auto h-[14px] w-px bg-[#d0d2d9]"></i>
                    </div>
                    <!-- pointer and assistant button over the dashboard -->
                    <svg class="absolute top-[936px] left-[429px]" width="17" height="18" viewBox="0 0 17 18"><path d="M5.500 12L2 8.500C1 7 2.500 6 4 7.200l1.200 1V2c0-2 2.400-2 2.400 0v4.500c.5-1 2.200-.8 2.300.4.600-.9 2.100-.6 2.200.5.800-.5 2.200-.2 2.200 1.200V13c0 3-1.500 5-2 6H7z" fill="#fff" stroke="#222" stroke-width="1.100"/><path d="M8 10v4M10.200 10v4M12.300 10v4" stroke="#222"/></svg>
                    <svg class="absolute top-[924px] left-[1267px]" width="14" height="14" viewBox="0 0 14 14" fill="none" stroke="#27324f" stroke-width="1.400"><circle cx="7" cy="6" r="6"/></svg>
                    <div class="absolute top-[890px] right-0 flex h-[43px] w-[45px] items-center rounded-l-full bg-linear-[120deg] from-[#3e5cf0] via-[#b94bc4] via-65% to-[#ff9d2e] pl-[11px] shadow-[0_1px_5px_rgba(60,60,120,0.3)]">
                        <svg width="23" height="24" viewBox="0 0 23 24"><path d="M10 0a9.500 9.500 0 0 1 9.500 9.500v4L16 20H1c1.500-2 0-4-.5-6V9.500A9.500 9.500 0 0 1 10 0z" fill="#fff"/><path d="M17 12l1.500 4 4 1.500-4 1.500L17 23.500 15.500 19l-4-1.500 4-1.500z" fill="#fff" stroke="#9a50d0" stroke-width=".8"/><g fill="#7d52dd"><circle cx="5.500" cy="10" r="1.300"/><circle cx="10" cy="10" r="1.300"/><circle cx="14.500" cy="10" r="1.300"/></g></svg>
                    </div>
                </section>
            </div>
            <figcaption class="cap mt-[32px] text-[47.200px] leading-[48px] text-[#1d232c]">举例：帆软BI</figcaption>
        </figure>
    </main>

    <script>
        // field lists: [kind, name]
        const dims = [
            ['group', '超市明细'], ['ABC', '产品_ID'], ['ABC', '产品名称'], ['ABC', '城市'], ['ABC', '订单_ID'],
            ['date', '订单日期'], ['date', '发货日期'], ['ABC', '国家/地区'], ['ABC', '客户_ID'], ['ABC', '客户名称'],
            ['ABC', '类别'], ['ABC', '区域']
        ];
        const measures = [
            ['group', '超市明细'], ['0.2', '利润'], ['123', '数量'], ['0.2', '销售额'], ['123', '折扣'],
            ['group', '自定义度量'], ['=0.2', '销量'], ['=0.2', '销售额(万元）'], ['top', '度量值'], ['top', '动态度量']
        ];

        function fieldRow([kind, name]) {
            if (kind === 'group') {
                return `<div class="flex h-[29.6px] items-center pl-[18px]"><svg class="mr-[8px] text-[#757a92]" width="11" height="8"><use href="#chev"/></svg>${name}</div>`;
            }
            if (kind === 'date') {
                return `<div class="flex h-[29.6px] items-center pl-[22px]"><svg class="mr-[7px]" width="16" height="14"><use href="#date"/></svg>${name}</div>`;
            }
            if (kind === 'ABC') {
                return `<div class="flex h-[29.6px] items-center pl-[22px]"><b class="num w-[23px] text-[9.5px] tracking-[-0.5px] text-[#5b8cda] italic">ABC</b>${name}</div>`;
            }
            if (kind === 'top') {
                return `<div class="flex h-[29.6px] items-center pl-[19px]"><b class="num w-[21px] text-[10px] text-[#65bda6]">0.2</b>${name}</div>`;
            }
            return `<div class="flex h-[29.6px] items-center pl-[20px]"><b class="num mr-[8px] flex w-[17px] justify-end text-[10px] tracking-[-0.2px] text-[#65bda6]">${kind}</b>${name}</div>`;
        }
        document.getElementById('dims').innerHTML = dims.map(fieldRow).join('');
        document.getElementById('measures').innerHTML = measures.map(fieldRow).join('');

        const line = (x1, y, x2, color, extra = '') =>
            `<path d="M${x1} ${y}H${x2}" stroke="${color}" ${extra}/>`;
        const text = (x, y, str, size, color, anchor = 'middle', extra = '') =>
            `<text x="${x}" y="${y + size * 0.355}" font-size="${size}" fill="${color}" text-anchor="${anchor}" ${extra}>${str}</text>`;

        // quarterly sales
        const tops = [483.3, 461, 454, 445, 438, 461, 443, 440, 429.5, 456, 435.7, 431.7, 413.5, 438, 422, 407.3,
            392.5, 438, 402.8, 397, 375.5, 428, 387, 377.7, 344, 393.6, 338.5, 350, 331, 342, 440];
        const labels = [
            [431, 464, '81.39'], [477.6, 463, '86.08'], [524.7, 469.4, '59.84'], [571.8, 448.3, '148.25'],
            [634.3, 438, '193.61'], [649.6, 460.5, '97.92'], [681.5, 439.5, '185.58'], [728, 435, '205.18'],
            [712.7, 455.4, '119.69'], [775, 438.4, '190.99'], [759.2, 413.5, '296.50'], [806.3, 417, '282.79'],
            [845.5, 461.6, '92.61']
        ];
        let s = text(305, 243.5, '销售额(万元）(按发货日期、预测划分)(1)', 16.8, '#242f57', 'start');
        s += '<g class="num">';
        s += line(376, 319, 862, '#e4e4e4', 'stroke-dasharray="3 2.5"') + line(376, 401.5, 862, '#e8e8e8', 'stroke-dasharray="3 2.5"');
        tops.forEach((y, i) => {
            s += `<rect x="${377.6 + i * 15.63}" y="${y}" width="12.6" height="${484.5 - y}" fill="#668ff3"/>`;
        });
        s += line(376, 485, 862, '#c9cbd3', 'stroke-width="1.5"');
        s += line(376, 428, 862, '#ee8f8f', 'stroke-width="1.5" stroke-dasharray="2.5 2.5" opacity="0.6"');
        s += text(366, 318.5, '350.00', 12, '#7b7b7b', 'end') + text(366, 401, '175.00', 12, '#7b7b7b', 'end') + text(366, 477, '0.00', 12, '#7b7b7b', 'end');
        s += text(385, 412.5, '销售额(万元）中位数 119.69', 12.7, '#7b7b7b', 'start');
        s += text(0, 0, '销售额(万元）', 12.2, '#7b7b7b', 'middle', 'transform="translate(315 383) rotate(-90)"');
        ['2017年第3季度', '2019年第1季度', '2020年第3季度', '2022年第1季度', '2023年第3季度'].forEach((q, i) => {
            s += text(431 + i * 93.75, 500.5, q, 12.3, '#6a6a6a');
        });
        s += text(618.6, 519, '发货日期', 12.5, '#6a6a6a');
        labels.forEach(([x, y, v]) => { s += text(x, y, v, 12.4, '#151515'); });
        s += '</g>';
        // selection frame with handles
        s += '<rect x="284" y="210" width="599" height="337" fill="none" stroke="#6a8bf6" stroke-width="1.5"/>';
        s += '<g fill="#3353f2"><path d="M283 209h10v3h-7v7h-3zM884 209h-10v3h7v7h3zM283 548h10v-3h-7v-7h-3zM884 548h-10v-3h7v-7h3z"/><path d="M578 209h10v4h-10zM578 544h10v4h-10zM283 373h4v10h-4zM880 373h4v10h-4z"/></g>';
        document.getElementById('salesChart').innerHTML = s;

        // sales by store: [label, label y, bar top, second bar top]
        const stores = [
            ['60.02K', 905, 917.2, 919], ['17.15K', 907, 919, 919], ['708.29K', 858.3, 871, 919], ['82.84K', 903, 915, 919],
            ['5306.19K', 528.3, 541, 903.5], ['245.15K', 891.2, 903.5, 919], ['3364.01K', 667.6, 680, 913], ['172.54K', 896.5, 909, 919],
            ['171.88K', 896.5, 909, 919], ['1115.46K', 829, 841.2, 918], ['100.93K', 902, 914, 919], ['118.34K', 901, 913, 919],
            ['39.82K', 906, 918, 919], ['101.18K', 901.5, 914, 919], ['112.57K', 901, 913, 919]
        ];
        const gridY = [274.5, 346, 418, 489.5, 561.5, 633.5, 705.5, 777.5, 849.5];
        let t = '<rect x="3044" y="242" width="12.5" height="12.5" rx="1" fill="#5f82ea"/><rect x="3126" y="242" width="13" height="12.5" rx="1" fill="#74c2ea"/>';
        t += text(3061, 249, '销售额', 18.7, '#5a6170', 'start') + text(3143.5, 249, '数量', 18.7, '#5a6170', 'start');
        gridY.forEach((y, i) => {
            t += line(2599, y, 3769, '#eff0f2');
            t += text(2595.5, i === 0 ? 289.5 : y, `${9 - i}000.00K`, 18.3, '#5a6272', 'end');
        });
        t += text(2595.5, 906, '0.00K', 18.3, '#5a6272', 'end');
        // axis title, one character under the other, slash lying on its side
        [['销', 556.8], ['售', 575.3], ['额', 594.4], ['数', 625], ['量', 643.8]].forEach(([c, y]) => {
            t += text(2500.6, y, c, 18.7, '#5a6170');
        });
        t += text(0, 0, '/', 18.7, '#5a6170', 'middle', 'transform="translate(2500.6 609.3) rotate(90)"');
        stores.forEach(([v, ly, a, b], i) => {
            const x = 2613.5 + i * 82.35;
            t += `<rect x="${x}" y="${a}" width="25" height="${921 - a}" rx="1" fill="#5f82ea"/>`;
            t += `<rect x="${x + 28.7}" y="${b}" width="25" height="${921 - b}" rx="1" fill="#74c2ea"/>`;
            t += text(x + 12.5 + (i === 0 ? 6 : 0), ly, v, 19.4, '#2a4fd6');
        });
        t += line(2599, 921, 3769, '#d3d5da');
        [[2640.5, '七台河店'], [2887.5, '三门峡店'], [3134, '东莞店'], [3381.5, '中山店'], [3628.5, '临沧店']].forEach(([x, n]) => {
            t += text(x, 938.5, n, 18.7, '#1c2747');
        });
        t += '<rect x="2599" y="953" width="1170" height="6" rx="3" fill="#f7f7f9"/><rect x="2599" y="953" width="55" height="6" rx="3" fill="#e2e3e8"/>';
        document.getElementById('storeChart').innerHTML = t;
    </script>
</body>
</html>
